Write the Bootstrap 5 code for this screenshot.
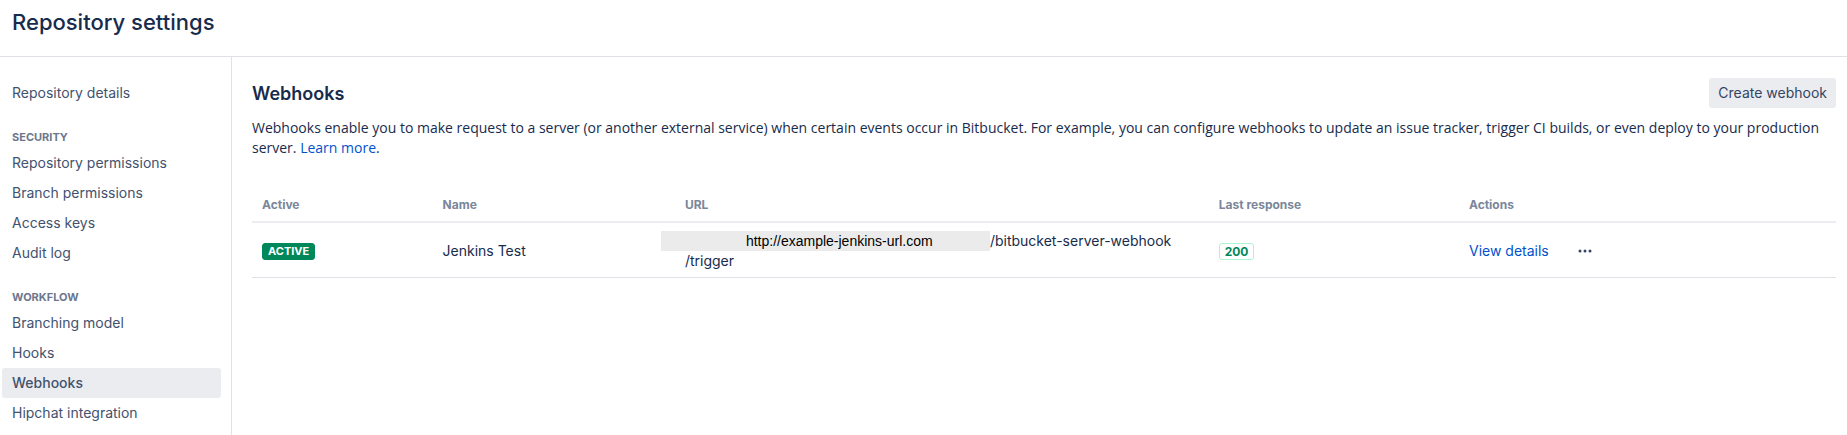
<!DOCTYPE html>
<html lang="en">
<head>
<meta charset="utf-8">
<meta name="viewport" content="width=device-width, initial-scale=1">
<title>Repository settings</title>
<link rel="stylesheet" href="https://cdn.jsdelivr.net/npm/bootstrap@5.3.0/dist/css/bootstrap.min.css">
<style>
  body { font-family: Inter, "Liberation Sans", sans-serif; font-size: 14px; line-height: 20px; color: #172b4d; }
  a { color: #0052cc; text-decoration: none; }
  .page-head { height: 57px; padding: 6px 12px; border-color: #dfe1e6 !important; }
  .page-head h1 { font-size: 22px; line-height: 32px; font-weight: 500; }
  .settings-nav { width: 232px; padding: 21px 10px 7px 2px; border-color: #dfe1e6 !important; }
  .settings-nav .nav-link { color: #42526e; padding: 5px 10px; border-radius: 3px; }
  .settings-nav .nav-link.active { background: #ebecf0; font-weight: 500; }
  .settings-nav h2 { font-size: 11px; line-height: 18px; font-weight: 700; color: #6b778c; padding: 20px 10px 2px; }
  .content { padding: 20px 11px 20px 20px; }
  .content h2 { font-size: 18px; line-height: 30px; font-weight: 600; padding-top: 2px; }
  .btn-create { --bs-btn-font-size: 14px; --bs-btn-line-height: 20px; --bs-btn-padding-x: 8px; --bs-btn-padding-y: 4px; --bs-btn-border-radius: 3px; --bs-btn-color: #344563; --bs-btn-bg: #ebecf0; --bs-btn-hover-bg: #dfe1e6; }
  .intro { margin: 9px 0 32px; font-family: "Open Sans", sans-serif; }
  .hooks { table-layout: fixed; --bs-table-color: #172b4d; --bs-table-bg: transparent; border-color: #dfe1e6; }
  .hooks th { font-size: 12px; line-height: 20px; font-weight: 700; color: #7a869a; padding: 5px 10px 6px; border-bottom: 2px solid #ebecf0; }
  .hooks td { padding: 8px 10px 6px; }
  .tag { display: block; width: fit-content; font-size: 11px; line-height: 15px; font-weight: 700; padding: 0 5px; border: 1px solid; border-radius: 3px; }
  .tag-on { color: #fff; background: #00875a; border-color: #00875a; }
  .tag-code { font-size: 12px; color: #00875a; border-color: #abf5d1; padding: 0 5px; }
  .host { display: inline-block; width: 329px; margin-left: -24px; padding-left: 85px; background: #ebebeb; color: #000; font-family: "Liberation Sans", Arial, sans-serif; vertical-align: top; }
  .more { width: 24px; height: 24px; color: #344563; }
</style>
</head>
<body>
<div class="d-flex flex-column min-vh-100">
  <header class="page-head border-bottom"><h1 class="m-0">Repository settings</h1></header>
  <div class="d-flex flex-grow-1">
    <nav class="settings-nav nav flex-column flex-nowrap flex-shrink-0 border-end" aria-label="Repository settings">
      <a class="nav-link" href="#">Repository details</a>
      <h2 class="m-0">SECURITY</h2>
      <a class="nav-link" href="#">Repository permissions</a>
      <a class="nav-link" href="#">Branch permissions</a>
      <a class="nav-link" href="#">Access keys</a>
      <a class="nav-link" href="#">Audit log</a>
      <h2 class="m-0">WORKFLOW</h2>
      <a class="nav-link" href="#">Branching model</a>
      <a class="nav-link" href="#">Hooks</a>
      <a class="nav-link active" href="#" aria-current="page">Webhooks</a>
      <a class="nav-link" href="#">Hipchat integration</a>
    </nav>
    <main class="content flex-grow-1">
      <div class="d-flex justify-content-between align-items-center">
        <h2 class="m-0">Webhooks</h2>
        <button type="button" class="btn btn-create">Create webhook</button>
      </div>
      <p class="intro">Webhooks enable you to make request to a server (or another external service) when certain events occur in Bitbucket. For example, you can configure webhooks to update an issue tracker, trigger CI builds, or even deploy to your production server. <a href="#">Learn more</a>.</p>
      <table class="hooks table align-middle m-0">
        <colgroup><col style="width:11.4%"><col style="width:15.3%"><col style="width:33.7%"><col style="width:15.8%"><col></colgroup>
        <thead><tr><th scope="col">Active</th><th scope="col">Name</th><th scope="col">URL</th><th scope="col">Last response</th><th scope="col">Actions</th></tr></thead>
        <tbody>
          <tr>
            <td><span class="tag tag-on">ACTIVE</span></td>
            <td>Jenkins Test</td>
            <td><span class="host">http://example-jenkins-url.com</span>/bitbucket-server-webhook<br>/trigger</td>
            <td><span class="tag tag-code">200</span></td>
            <td>
              <div class="d-flex align-items-center">
                <a href="#">View details</a>
                <button type="button" class="more btn border-0 p-0 ms-4 d-flex align-items-center justify-content-center" aria-label="More actions">
                  <svg width="14" height="4" viewBox="0 0 14 4" fill="currentColor" aria-hidden="true"><circle cx="2" cy="2" r="1.5"/><circle cx="7" cy="2" r="1.5"/><circle cx="12" cy="2" r="1.5"/></svg>
                </button>
              </div>
            </td>
          </tr>
        </tbody>
      </table>
    </main>
  </div>
</div>
<script src="https://cdn.jsdelivr.net/npm/bootstrap@5.3.0/dist/js/bootstrap.bundle.min.js"></script>
</body>
</html>
